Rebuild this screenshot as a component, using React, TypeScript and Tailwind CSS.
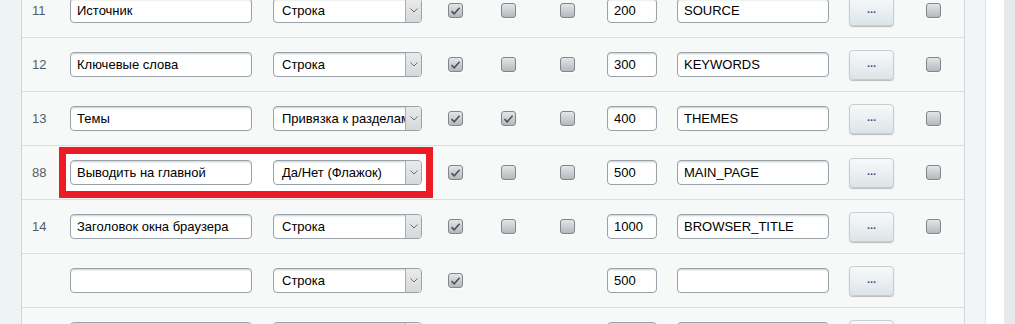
const rows = [
  { num: '11', name: 'Источник', type: 'Строка', c1: true, c2: false, c3: false, sort: '200', code: 'SOURCE', c4: false },
  { num: '12', name: 'Ключевые слова', type: 'Строка', c1: true, c2: false, c3: false, sort: '300', code: 'KEYWORDS', c4: false },
  { num: '13', name: 'Темы', type: 'Привязка к разделам', c1: true, c2: true, c3: false, sort: '400', code: 'THEMES', c4: false },
  { num: '88', name: 'Выводить на главной', type: 'Да/Нет (Флажок)', c1: true, c2: false, c3: false, sort: '500', code: 'MAIN_PAGE', c4: false, mark: true },
  { num: '14', name: 'Заголовок окна браузера', type: 'Строка', c1: true, c2: false, c3: false, sort: '1000', code: 'BROWSER_TITLE', c4: false },
  { num: '', name: '', type: 'Строка', c1: true, sort: '500', code: '', isNew: true },
  // last row is mostly below the fold, only the input tops show
  { num: '', name: '', type: '', c1: true, sort: '', code: '', isNew: true, cut: true },
];

const inputCls =
  'h-[25px] rounded-[4px] border border-[#9aa2a9] bg-white px-[6px] text-[13px] leading-[23px] text-black shadow-[inset_0_2px_2px_-1px_rgba(180,188,191,0.7)] whitespace-nowrap overflow-hidden';

function Check({ on }: { on?: boolean }) {
  return (
    <span className="flex h-[15px] w-[15px] items-center justify-center rounded-[3px] border border-[#7f878d] bg-gradient-to-b from-[#e4e6e8] to-[#b5b9bc] shadow-[0_1px_0_rgba(255,255,255,0.8)]">
      {on && (
        <svg width="11" height="10" viewBox="0 0 11 10" fill="none">
          <path d="M1.5 5.2L4.2 7.8L9.6 1.8" stroke="#4c5257" strokeWidth="1.6" />
        </svg>
      )}
    </span>
  );
}

function Select({ value }: { value: string }) {
  return (
    <div className="flex h-[25px] w-[149px] overflow-hidden rounded-[4px] border border-[#9aa2a9] bg-white shadow-[inset_0_2px_2px_-1px_rgba(180,188,191,0.7)]">
      <span className="min-w-0 flex-1 overflow-hidden whitespace-nowrap pl-[8px] text-[13px] leading-[23px] text-black">{value}</span>
      <span className="flex w-[16px] shrink-0 items-center justify-center border-l border-[#a9aeb2] bg-gradient-to-b from-[#e9eaeb] to-[#d6d8d9]">
        <svg width="8" height="5" viewBox="0 0 8 5" fill="none">
          <path d="M0.5 0.5L4 4L7.5 0.5" stroke="#6b7176" strokeWidth="1" />
        </svg>
      </span>
    </div>
  );
}

export default function App() {
  return (
    <div className="flex h-[324px] w-[1015px] overflow-hidden bg-white" style={{ fontFamily: '"Liberation Sans", Arial, sans-serif' }}>
      <div className="w-[22px] shrink-0 border-r border-[#d0d7db] bg-[#eef3f6]" />
      <div className="w-[943px] shrink-0 border-r border-[#d2d9dd] bg-[#f7f9f9]">
        <div className="-mt-[16px]">
          {rows.map((r, i) => (
            <div key={i} className="relative flex h-[54px] items-center border-b border-[#d9dfe1]">
              {r.mark && (
                <div className="absolute left-[37px] top-[1px] h-[51px] w-[374px] border-[7px] border-[#ed1c24] bg-white" />
              )}
              <span className="relative w-[48px] shrink-0 pl-[10px] text-[13px] text-[#555c63]">{r.num}</span>
              <div className={`relative w-[182px] shrink-0 ${inputCls}`}>{r.name}</div>
              <div className="relative ml-[21px] shrink-0">
                <Select value={r.type} />
              </div>
              <div className="ml-[26px] shrink-0">
                <Check on={r.c1} />
              </div>
              {r.isNew ? (
                <div className="w-[112px] shrink-0" />
              ) : (
                <>
                  <div className="ml-[38px] shrink-0">
                    <Check on={r.c2} />
                  </div>
                  <div className="ml-[44px] shrink-0">
                    <Check on={r.c3} />
                  </div>
                </>
              )}
              <div className={`ml-[32px] w-[50px] shrink-0 ${inputCls}`}>{r.sort}</div>
              <div className={`ml-[20px] w-[152px] shrink-0 ${inputCls}`}>{r.code}</div>
              <button className="ml-[20px] flex h-[30px] w-[45px] shrink-0 items-center justify-center rounded-[4px] border border-[#c5cdd1] bg-gradient-to-b from-[#f7f9fa] to-[#dde5e8] pb-[2px] text-[11px] font-bold text-[#3d4a88] shadow-[0_1px_1px_rgba(0,0,0,0.25)]">
                {r.cut ? '' : '...'}
              </button>
              {!r.isNew && (
                <div className="ml-[32px] shrink-0">
                  <Check on={r.c4} />
                </div>
              )}
            </div>
          ))}
        </div>
      </div>
      <div className="w-[21px] shrink-0 border-r border-[#dfe5e8] bg-[#f1f5f7]" />
      <div className="w-[18px] shrink-0 bg-white" />
      <div className="flex-1 bg-[#e6eaec]" />
    </div>
  );
}
